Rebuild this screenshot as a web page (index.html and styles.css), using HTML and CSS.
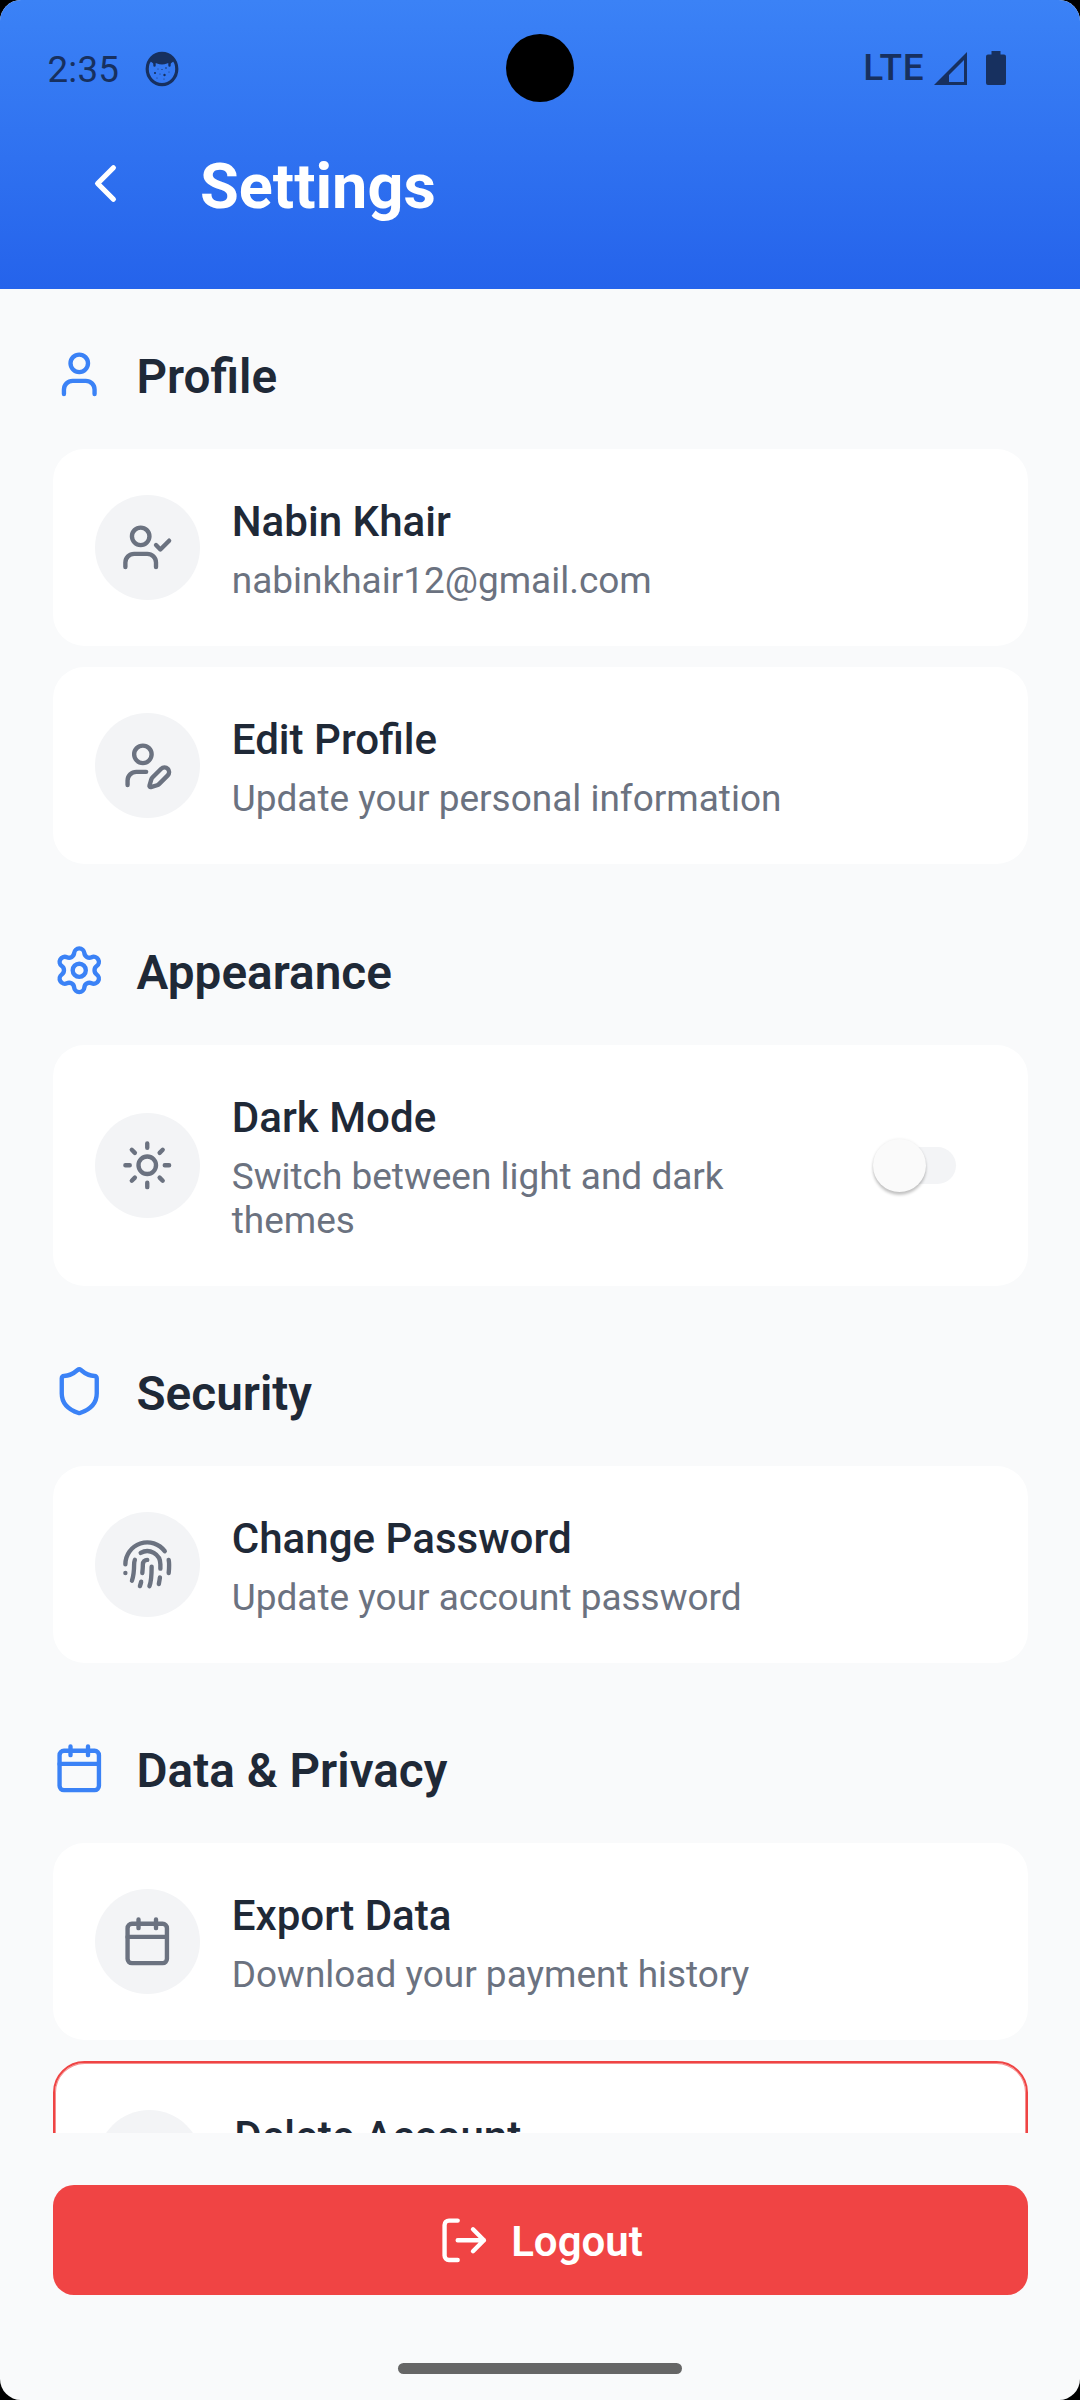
FILE: index.html
```html
<!DOCTYPE html>
<html lang="en">
<head>
<meta charset="utf-8">
<title>Settings</title>
<link rel="stylesheet" href="styles.css">
</head>
<body>
<svg class="defs" width="0" height="0">
  <symbol id="user" viewBox="0 0 24 24"><path d="M19 21v-2a4 4 0 0 0-4-4H9a4 4 0 0 0-4 4v2"/><circle cx="12" cy="7" r="4"/></symbol>
  <symbol id="user-check" viewBox="0 0 24 24"><path d="m16 11 2 2 4-4"/><path d="M16 21v-2a4 4 0 0 0-4-4H6a4 4 0 0 0-4 4v2"/><circle cx="9" cy="7" r="4"/></symbol>
  <symbol id="user-pen" viewBox="0 0 24 24"><path d="M11.5 15H7a4 4 0 0 0-4 4v2"/><path d="M21.378 16.626a1 1 0 0 0-3.004-3.004l-4.01 4.012a2 2 0 0 0-.506.854l-.837 2.87a.5.5 0 0 0 .62.62l2.87-.837a2 2 0 0 0 .854-.506z"/><circle cx="10" cy="7" r="4"/></symbol>
  <symbol id="settings" viewBox="0 0 24 24"><path d="M9.671 4.136a2.34 2.34 0 0 1 4.659 0 2.34 2.34 0 0 0 3.319 1.915 2.34 2.34 0 0 1 2.33 4.033 2.34 2.34 0 0 0 0 3.831 2.34 2.34 0 0 1-2.33 4.033 2.34 2.34 0 0 0-3.319 1.915 2.34 2.34 0 0 1-4.659 0 2.34 2.34 0 0 0-3.32-1.915 2.34 2.34 0 0 1-2.33-4.033 2.34 2.34 0 0 0 0-3.831A2.34 2.34 0 0 1 6.35 6.051a2.34 2.34 0 0 0 3.319-1.915"/><circle cx="12" cy="12" r="3"/></symbol>
  <symbol id="sun" viewBox="0 0 24 24"><circle cx="12" cy="12" r="4"/><path d="M12 2v2M12 20v2M4.93 4.93l1.41 1.41M17.66 17.66l1.41 1.41M2 12h2M20 12h2M6.34 17.66l-1.41 1.41M19.07 4.93l-1.41 1.41"/></symbol>
  <symbol id="shield" viewBox="0 0 24 24"><path d="M20 13c0 5-3.5 7.5-7.66 8.95a1 1 0 0 1-.67-.01C7.5 20.5 4 18 4 13V6a1 1 0 0 1 1-1c2 0 4.5-1.2 6.24-2.72a1.17 1.17 0 0 1 1.52 0C14.51 3.81 17 5 19 5a1 1 0 0 1 1 1z"/></symbol>
  <symbol id="fingerprint" viewBox="0 0 24 24"><path d="M12 10a2 2 0 0 0-2 2c0 1.02-.1 2.51-.26 4"/><path d="M14 13.12c0 2.38 0 6.38-1 8.88"/><path d="M17.29 21.02c.12-.6.43-2.3.5-3.02"/><path d="M2 12a10 10 0 0 1 18-6"/><path d="M2 16h.01"/><path d="M21.8 16c.2-2 .131-5.354 0-6"/><path d="M5 19.5C5.5 18 6 15 6 12a6 6 0 0 1 .34-2"/><path d="M8.65 22c.21-.66.45-1.32.57-2"/><path d="M9 6.8a6 6 0 0 1 9 5.2v2"/></symbol>
  <symbol id="calendar" viewBox="0 0 24 24"><path d="M8 2v4M16 2v4M3 10h18"/><rect x="3" y="4" width="18" height="18" rx="2"/></symbol>
  <symbol id="trash" viewBox="0 0 24 24"><path d="M3 6h18M19 6v14a2 2 0 0 1-2 2H7a2 2 0 0 1-2-2V6M8 6V4a2 2 0 0 1 2-2h4a2 2 0 0 1 2 2v2"/></symbol>
  <symbol id="log-out" viewBox="0 0 24 24"><path d="M9 21H5a2 2 0 0 1-2-2V5a2 2 0 0 1 2-2h4M16 17l5-5-5-5M21 12H9"/></symbol>
  <symbol id="chevron-left" viewBox="0 0 24 24"><path d="m15 18-6-6 6-6"/></symbol>
</svg>
<div class="screen">
  <header class="header">
    <div class="status">
      <span class="time">2:35</span>
      <svg class="face" viewBox="0 0 34 36"><ellipse cx="17" cy="18" rx="14.800" ry="15.600" fill="none" stroke="currentColor" stroke-width="3.200"/><path d="M5 10Q9 2 17 2t12 8l-4 3q-1.500-1.500-3-.5-5 2-10 0-1.500-1-3 .5z" fill="currentColor"/><path d="M9.500 11v3.500M24.500 11v3.500" stroke="currentColor" stroke-width="2.400" stroke-linecap="round"/><g fill="currentColor"><circle cx="10" cy="22" r="1.100"/><circle cx="19.500" cy="24" r="1.200"/><circle cx="21" cy="17" r=".8"/><circle cx="17" cy="18.500" r=".6"/><circle cx="13" cy="18" r=".5"/><circle cx="15" cy="23" r=".5"/><circle cx="24" cy="21" r=".5"/><circle cx="12" cy="27" r=".5"/><circle cx="19" cy="28" r=".5"/></g></svg>
      <span class="camera"></span>
      <span class="network">LTE</span>
      <svg class="signal" viewBox="0 0 33 33"><path fill-rule="evenodd" d="M0 33 33 0v33zM15 30h15V8L15 23z" fill="currentColor"/></svg>
      <svg class="battery" viewBox="0 0 20 34"><path d="M5.500 0h9v3.500H18a2 2 0 0 1 2 2V32a2 2 0 0 1-2 2H2a2 2 0 0 1-2-2V5.500a2 2 0 0 1 2-2h3.500z" fill="currentColor"/></svg>
    </div>
    <div class="titlebar">
      <svg class="icon back"><use href="#chevron-left"/></svg>
      <h1>Settings</h1>
    </div>
  </header>

  <main class="content">
    <section class="section">
      <div class="section-head"><svg class="icon"><use href="#user"/></svg><h2>Profile</h2></div>
      <div class="cards">
        <div class="card"><div class="badge"><svg class="icon"><use href="#user-check"/></svg></div><div class="text"><h3>Nabin Khair</h3><p>nabinkhair12@gmail.com</p></div></div>
        <div class="card"><div class="badge"><svg class="icon"><use href="#user-pen"/></svg></div><div class="text"><h3>Edit Profile</h3><p>Update your personal information</p></div></div>
      </div>
    </section>
    <section class="section">
      <div class="section-head"><svg class="icon"><use href="#settings"/></svg><h2>Appearance</h2></div>
      <div class="cards">
        <div class="card"><div class="badge"><svg class="icon"><use href="#sun"/></svg></div><div class="text"><h3>Dark Mode</h3><p>Switch between light and dark themes</p></div><div class="switch"><span class="thumb"></span></div></div>
      </div>
    </section>
    <section class="section">
      <div class="section-head"><svg class="icon"><use href="#shield"/></svg><h2>Security</h2></div>
      <div class="cards">
        <div class="card"><div class="badge"><svg class="icon"><use href="#fingerprint"/></svg></div><div class="text"><h3>Change Password</h3><p>Update your account password</p></div></div>
      </div>
    </section>
    <section class="section">
      <div class="section-head"><svg class="icon"><use href="#calendar"/></svg><h2>Data &amp; Privacy</h2></div>
      <div class="cards">
        <div class="card"><div class="badge"><svg class="icon"><use href="#calendar"/></svg></div><div class="text"><h3>Export Data</h3><p>Download your payment history</p></div></div>
        <div class="card danger"><div class="badge"><svg class="icon"><use href="#trash"/></svg></div><div class="text"><h3>Delete Account</h3></div></div>
      </div>
    </section>
  </main>

  <footer class="footer">
    <button class="logout"><svg class="icon"><use href="#log-out"/></svg><span>Logout</span></button>
    <div class="handle"></div>
  </footer>
</div>
</body>
</html>
```
FILE: styles.css
```css
* { box-sizing: border-box; }
body { margin: 0; background: #000; font-family: Roboto, sans-serif; }
h1, h2, h3, p { margin: 0; }
.defs { display: block; }
.screen {
  display: flex; flex-direction: column;
  width: 1080px; height: 2400px;
  overflow: hidden; border-radius: 21px;
  background: #f9fafb; color: #1f2937;
}
.icon {
  display: block; flex: none; width: 52.5px; height: 52.5px;
  overflow: visible; fill: none; stroke: currentColor;
  stroke-width: 2; stroke-linecap: round; stroke-linejoin: round;
}

.header {
  flex: none; height: 289px; color: #fff;
  background: linear-gradient(#3b82f6, #2563eb);
}
.status {
  position: relative; display: flex; align-items: center;
  height: 136px; padding: 0 74px 0 47.5px; color: #17305f;
}
.time { font-size: 36.75px; line-height: 44px; padding-top: 4px; width: 97.5px; letter-spacing: .2px; }
.face { width: 34px; height: 36px; margin-top: 1px; }
.camera {
  position: absolute; left: 506px; top: 34px;
  width: 68px; height: 68px; border-radius: 50%; background: #000;
}
.network { margin-left: auto; font-size: 37px; font-weight: 500; line-height: 44px; letter-spacing: .8px; }
.signal { width: 33px; height: 33px; margin-left: 9.5px; }
.battery { width: 20px; height: 34px; margin-left: 19px; }
.titlebar { display: flex; align-items: center; gap: 63px; padding: 10px 74px 0; }
.back { width: 63px; height: 63px; margin-top: -6px; }
h1 { font-size: 63px; font-weight: 700; line-height: 80px; padding-top: 1px; }

.content { flex: none; height: 1844px; padding: 57.5px 52.5px 0; overflow: hidden; }
.section { margin-bottom: 77.5px; }
.section:first-child { margin-bottom: 78.5px; }
.section-head {
  display: flex; align-items: center; gap: 31.5px;
  height: 55px; margin-bottom: 47.5px; color: #3b82f6;
}
h2 { font-size: 47.7px; font-weight: 600; line-height: 55px; padding-top: 6px; color: #1f2937; }
.cards { display: flex; flex-direction: column; gap: 21px; }
.card {
  display: flex; align-items: center; gap: 32.25px;
  min-height: 197px; padding: 43px 42px;
  border-radius: 31.5px; background: #fff;
}
.badge {
  display: flex; flex: none; align-items: center; justify-content: center;
  width: 105px; height: 105px; border-radius: 50%;
  background: #f3f4f6; color: #6b7280;
}
.text { flex: 1; padding-top: 5px; }
h3 { font-size: 42.1px; font-weight: 500; line-height: 49px; margin-bottom: 13px; }
p { font-size: 36.98px; line-height: 44px; color: #6b7280; }
.danger {
  align-items: flex-start; padding: 44px 42.6px;
  border: 2px solid #ef4444;
  box-shadow: inset 0 0 0 1px rgba(239, 68, 68, .6);
}
.danger .badge { margin-top: 3px; }
.switch {
  position: relative; flex: none; width: 75px; height: 37px;
  margin: 0 29.5px 0 24px; border-radius: 19px; background: #f3f4f6;
}
.thumb {
  position: absolute; left: -8px; top: -8px;
  width: 53px; height: 53px; border-radius: 50%; background: #fafafa;
  box-shadow: 0 3px 3px rgba(0, 0, 0, .22), 0 0 3px rgba(0, 0, 0, .08);
}

.footer {
  flex: 1; display: flex; flex-direction: column; align-items: center;
  padding: 52px 52.5px 0;
}
.logout {
  display: flex; align-items: center; justify-content: center; gap: 20.5px;
  width: 100%; height: 110px; padding: 0 0 0 1px; border: 0; border-radius: 21px;
  background: #f04444; color: #fff;
  font: 600 42px/49px Roboto, sans-serif;
}
.logout span { padding-top: 3px; }
.handle { width: 284px; height: 11px; margin-top: 68px; border-radius: 6px; background: #666; }
```
